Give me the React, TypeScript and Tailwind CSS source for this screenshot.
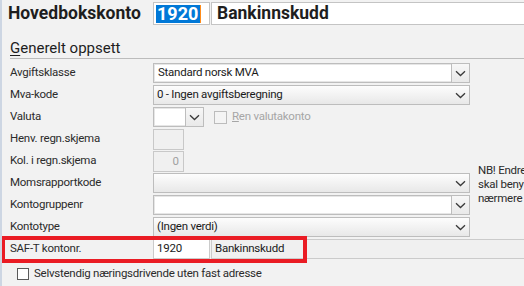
import React from "react";

const T = "text-[11.5px] tracking-[-0.25px]";

const Chevron = () => (
  <svg width="11" height="7" viewBox="0 0 11 7" className="block">
    <path d="M1 1.2 L5.5 5.5 L10 1.2" fill="none" stroke="#3a3a3a" strokeWidth="1.3" />
  </svg>
);

const EditCombo = ({ w, text }: { w: string; text?: string }) => (
  <div className={`flex h-[20px] ${w} border border-[#bdbdbd] bg-[#e6e6e6]`}>
    <div className="flex-1 bg-white m-[1px] mr-0 flex items-center pl-[3px] text-[11.5px] tracking-[-0.25px] text-[#1a1a1a]">{text}</div>
    <div className="w-[18px] flex items-center justify-center border-l border-[#bdbdbd] bg-gradient-to-b from-[#f7f7f7] to-[#e9e9e9]">
      <Chevron />
    </div>
  </div>
);

const GradSelect = ({ text }: { text?: string }) => (
  <div className="flex h-[20px] w-[317px] border border-[#bdbdbd] bg-gradient-to-b from-[#fdfdfd] to-[#e8e8e8] items-center">
    <div className="flex-1 pl-[3px] text-[11.5px] tracking-[-0.25px] text-[#1a1a1a]">{text}</div>
    <div className="w-[18px] flex items-center justify-center">
      <Chevron />
    </div>
  </div>
);

const Row = ({ label, children }: { label: string; children?: React.ReactNode }) => (
  <div className="flex h-[22px]">
    <div className="w-[151px] h-[20px] flex items-center pl-[8px] text-[11.5px] tracking-[-0.25px] text-[#2b2b2b]">{label}</div>
    {children}
  </div>
);

export default function App() {
  void T;
  return (
    <div
      className="relative w-[524px] h-[286px] overflow-hidden bg-[#f2f2f2] border-l-2 border-[#cdd6e3]"
      style={{ fontFamily: 'Roboto, "Noto Sans", sans-serif' }}
    >
      {/* header */}
      <div className="flex items-center pt-[2px]">
        <div className="w-[151px] pl-[6px] text-[17.5px] font-bold text-[#1e1e1e] leading-[23px] whitespace-nowrap">Hovedbokskonto</div>
        <div className="w-[57px] h-[23px] border border-[#c4c4c4] bg-white flex items-center pl-[2px]">
          <span className="bg-[#0078d7] text-white text-[18px] font-bold leading-[18px] px-[1px] pr-[2px]">1920</span>
          <span className="w-[1px] h-[18px] bg-[#ff8c1a]" />
        </div>
        <div className="flex-1 ml-[1px] mr-[-4px] h-[23px] border border-[#c4c4c4] bg-white flex items-center pl-[5px] text-[17.5px] font-bold text-[#1e1e1e]">
          Bankinnskudd
        </div>
      </div>

      {/* section title */}
      <div className="mt-[13px] ml-[8px] h-[21px] border-b border-[#bcbcbc] text-[15px] leading-[20px] text-[#1e1e1e]">
        <span className="underline underline-offset-2">G</span>enerelt oppsett
      </div>

      {/* rows */}
      <div className="flex mt-[4px]">
        <div className="w-[468px] shrink-0">
          <Row label="Avgiftsklasse">
            <EditCombo w="w-[317px]" text="Standard norsk MVA" />
          </Row>
          <Row label="Mva-kode">
            <GradSelect text="0 - Ingen avgiftsberegning" />
          </Row>
          <Row label="Valuta">
            <EditCombo w="w-[51px]" />
            <div className="flex items-center h-[20px] ml-[10px]">
              <div className="w-[13px] h-[13px] border border-[#bcbcbc] bg-[#f4f4f4]" />
              <span className="ml-[5px] text-[11.5px] tracking-[-0.25px] text-[#a6a6a6]">
                <span className="underline">R</span>en valutakonto
              </span>
            </div>
          </Row>
          <Row label="Henv. regn.skjema">
            <div className="w-[31px] h-[21px] border border-[#c8c8c8] bg-[#f0f0f0]" />
          </Row>
          <Row label="Kol. i regn.skjema">
            <div className="w-[31px] h-[21px] border border-[#c8c8c8] bg-[#f0f0f0] flex items-center justify-end pr-[4px] text-[11.5px] text-[#a0a0a0]">
              0
            </div>
          </Row>
          <Row label="Momsrapportkode">
            <GradSelect />
          </Row>
          <Row label="Kontogruppenr">
            <EditCombo w="w-[317px]" />
          </Row>
          <Row label="Kontotype">
            <GradSelect text="(Ingen verdi)" />
          </Row>
        </div>
        <div className="pl-[8px] pt-[100px] text-[11.5px] tracking-[-0.25px] leading-[14px] text-[#2b2b2b] whitespace-nowrap">
          <div>NB! Endre</div>
          <div>skal beny</div>
          <div>nærmere</div>
        </div>
      </div>

      {/* SAF-T row */}
      <div className="flex h-[22px]">
        <div className="w-[151px] h-[20px] flex items-center pl-[8px] text-[11.5px] tracking-[-0.25px] text-[#2b2b2b]">SAF-T kontonr.</div>
        <div className="w-[57px] h-[20px] border border-[#cbcbcb] bg-white flex items-center pl-[3px] text-[11.5px] tracking-[-0.25px] text-[#1a1a1a]">1920</div>
        <div className="flex-1 ml-[1px] mr-[-4px] h-[20px] border border-[#cbcbcb] bg-[#f0f0f0] flex items-center pl-[3px] text-[11.5px] tracking-[-0.25px] text-[#1a1a1a]">
          Bankinnskudd
        </div>
      </div>

      {/* checkbox */}
      <div className="flex items-center h-[14px] mt-[6px] pl-[15px]">
        <div className="w-[12px] h-[12px] border border-[#5a5a5a] bg-white" />
        <span className="ml-[5px] text-[11.5px] tracking-[-0.25px] text-[#2b2b2b]">Selvstendig næringsdrivende uten fast adresse</span>
      </div>

      {/* red annotation */}
      <div className="absolute left-[-1px] top-[236px] w-[306px] h-[27px] border-4 border-[#ea1c24]" />
    </div>
  );
}
